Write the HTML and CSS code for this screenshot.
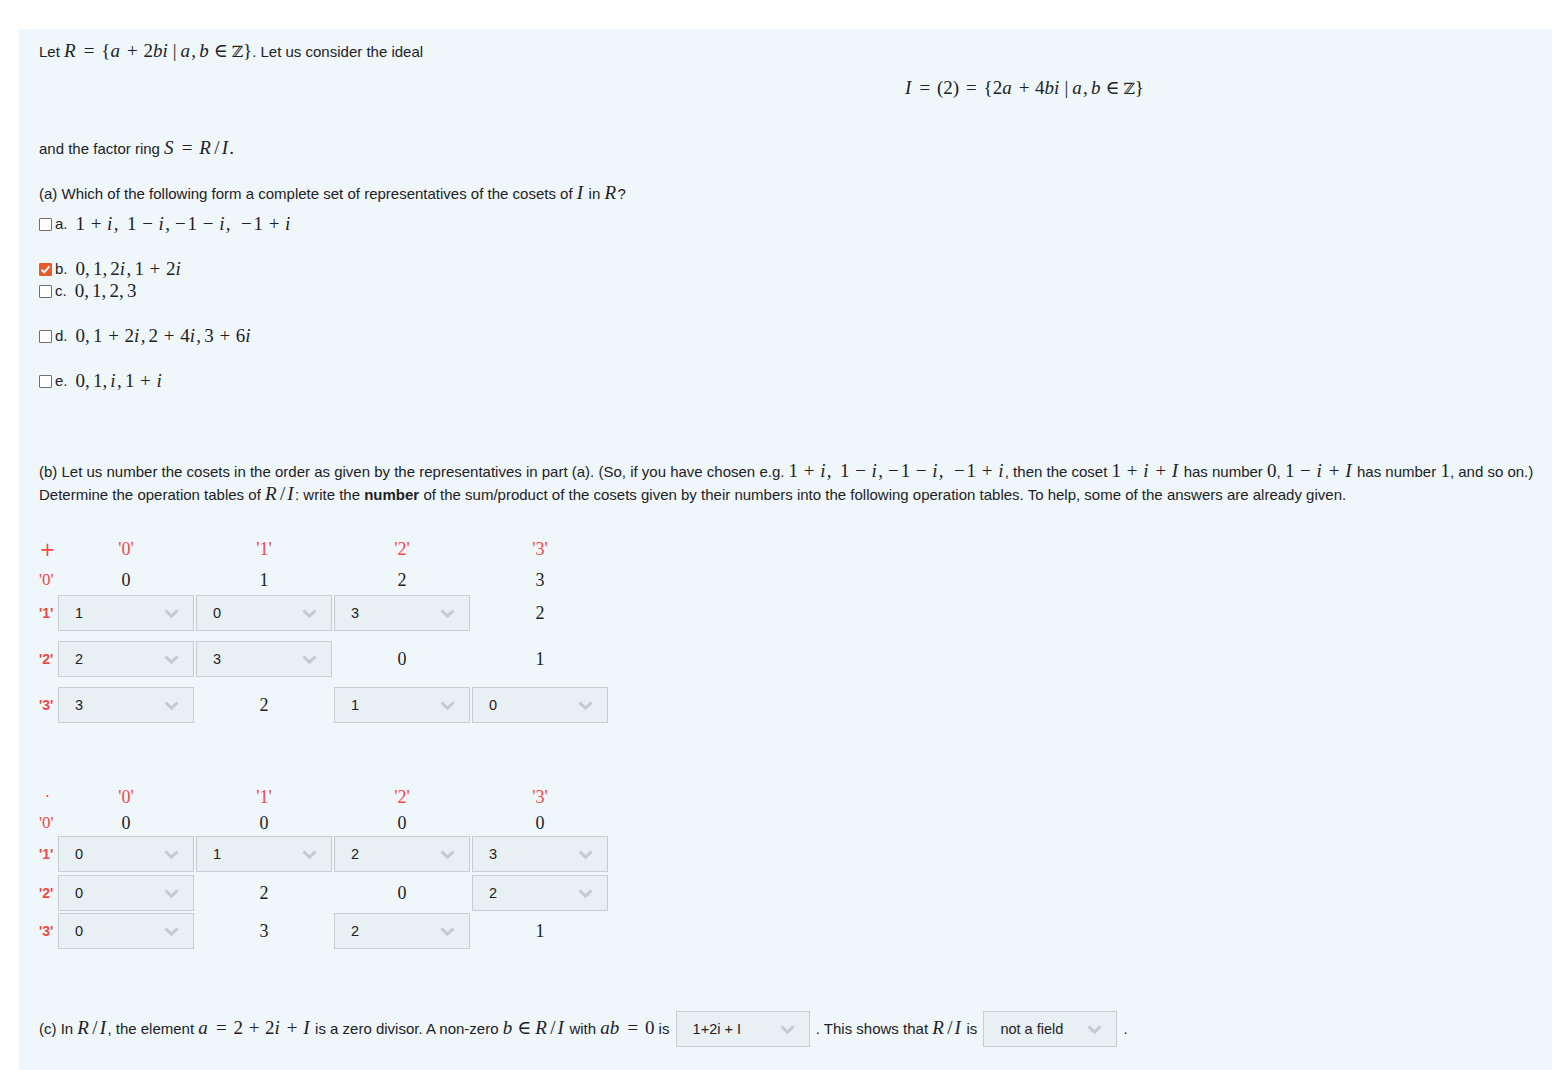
FILE: index.html
```html
<!DOCTYPE html>
<html>
<head>
<meta charset="utf-8">
<link rel="stylesheet" href="styles.css">
</head>
<body>
<div class="panel">
  <p class="line l1">Let <span class="m"><i>R</i><span class="r">=</span>{<i>a</i><span class="o">+</span>2<i>bi</i><span class="mid">|</span><i>a</i><span class="c">,</span><i>b</i><span class="in">∈</span><span class="bb">ℤ</span>}</span>. Let us consider the ideal</p>
  <div class="line display"><span class="m"><i>I</i><span class="r">=</span>(2)<span class="r">=</span>{2<i>a</i><span class="o">+</span>4<i>bi</i><span class="mid">|</span><i>a</i><span class="c">,</span><i>b</i><span class="in">∈</span><span class="bb">ℤ</span>}</span></div>
  <p class="line l3">and the factor ring <span class="m"><i>S</i><span class="r">=</span><i>R</i><span class="sl">/</span><i>I</i>.</span></p>
  <p class="line qa">(a) Which of the following form a complete set of representatives of the cosets of <span class="m"><i>I</i></span> in <span class="m"><i>R</i></span>?</p>
  <div class="opts">
    <div class="opt h45"><span class="cb"></span><span class="lbl">a.</span><span class="m ans">1<span class="o">+</span><i>i</i><span class="c">,</span><span class="sp"></span>1<span class="o">−</span><i>i</i><span class="c">,</span><span class="u">−</span>1<span class="o">−</span><i>i</i><span class="c">,</span><span class="sp"></span><span class="u">−</span>1<span class="o">+</span><i>i</i></span></div>
    <div class="opt h22"><span class="cb on"><svg width="13" height="13" viewBox="0 0 13 13"><path d="M2.5 6.8 L5.2 9.4 L10.5 3.4" fill="none" stroke="#fff" stroke-width="2"/></svg></span><span class="lbl">b.</span><span class="m ans">0<span class="c">,</span>1<span class="c">,</span>2<i>i</i><span class="c">,</span>1<span class="o">+</span>2<i>i</i></span></div>
    <div class="opt h45"><span class="cb"></span><span class="lbl">c.</span><span class="m ans">0<span class="c">,</span>1<span class="c">,</span>2<span class="c">,</span>3</span></div>
    <div class="opt h45"><span class="cb"></span><span class="lbl">d.</span><span class="m ans">0<span class="c">,</span>1<span class="o">+</span>2<i>i</i><span class="c">,</span>2<span class="o">+</span>4<i>i</i><span class="c">,</span>3<span class="o">+</span>6<i>i</i></span></div>
    <div class="opt h22"><span class="cb"></span><span class="lbl">e.</span><span class="m ans">0<span class="c">,</span>1<span class="c">,</span><i>i</i><span class="c">,</span>1<span class="o">+</span><i>i</i></span></div>
  </div>
  <p class="qb">(b) Let us number the cosets in the order as given by the representatives in part (a). (So, if you have chosen e.g. <span class="m">1<span class="o">+</span><i>i</i><span class="c">,</span><span class="sp"></span>1<span class="o">−</span><i>i</i><span class="c">,</span><span class="u">−</span>1<span class="o">−</span><i>i</i><span class="c">,</span><span class="sp"></span><span class="u">−</span>1<span class="o">+</span><i>i</i></span>, then the coset <span class="m">1<span class="o">+</span><i>i</i><span class="o">+</span><i>I</i></span> has number <span class="m">0</span>, <span class="m">1<span class="o">−</span><i>i</i><span class="o">+</span><i>I</i></span> has number <span class="m">1</span>, and so on.)<br>Determine the operation tables of <span class="m"><i>R</i><span class="sl">/</span><i>I</i></span>: write the <strong>number</strong> of the sum/product of the cosets given by their numbers into the following operation tables. To help, some of the answers are already given.</p>

  <div class="tbl t1">
    <div class="row hd"><div class="op">+</div><div class="ch">'0'</div><div class="ch">'1'</div><div class="ch">'2'</div><div class="ch">'3'</div></div>
    <div class="row r0"><div class="rl0">'0'</div><div class="v">0</div><div class="v">1</div><div class="v">2</div><div class="v">3</div></div>
    <div class="row rs h46"><div class="rl">'1'</div><div class="sel"><span>1</span><svg width="15" height="9" viewBox="0 0 15 9"><path d="M1.5 1.5 L7.5 7.2 L13.5 1.5" fill="none" stroke="#c6cacd" stroke-width="3"/></svg></div><div class="sel"><span>0</span><svg width="15" height="9" viewBox="0 0 15 9"><path d="M1.5 1.5 L7.5 7.2 L13.5 1.5" fill="none" stroke="#c6cacd" stroke-width="3"/></svg></div><div class="sel"><span>3</span><svg width="15" height="9" viewBox="0 0 15 9"><path d="M1.5 1.5 L7.5 7.2 L13.5 1.5" fill="none" stroke="#c6cacd" stroke-width="3"/></svg></div><div class="v">2</div></div>
    <div class="row rs h46"><div class="rl">'2'</div><div class="sel"><span>2</span><svg width="15" height="9" viewBox="0 0 15 9"><path d="M1.5 1.5 L7.5 7.2 L13.5 1.5" fill="none" stroke="#c6cacd" stroke-width="3"/></svg></div><div class="sel"><span>3</span><svg width="15" height="9" viewBox="0 0 15 9"><path d="M1.5 1.5 L7.5 7.2 L13.5 1.5" fill="none" stroke="#c6cacd" stroke-width="3"/></svg></div><div class="v">0</div><div class="v">1</div></div>
    <div class="row rs h36"><div class="rl">'3'</div><div class="sel"><span>3</span><svg width="15" height="9" viewBox="0 0 15 9"><path d="M1.5 1.5 L7.5 7.2 L13.5 1.5" fill="none" stroke="#c6cacd" stroke-width="3"/></svg></div><div class="v">2</div><div class="sel"><span>1</span><svg width="15" height="9" viewBox="0 0 15 9"><path d="M1.5 1.5 L7.5 7.2 L13.5 1.5" fill="none" stroke="#c6cacd" stroke-width="3"/></svg></div><div class="sel"><span>0</span><svg width="15" height="9" viewBox="0 0 15 9"><path d="M1.5 1.5 L7.5 7.2 L13.5 1.5" fill="none" stroke="#c6cacd" stroke-width="3"/></svg></div></div>
  </div>

  <div class="tbl t2">
    <div class="row hd2"><div class="op dot">·</div><div class="ch">'0'</div><div class="ch">'1'</div><div class="ch">'2'</div><div class="ch">'3'</div></div>
    <div class="row r02"><div class="rl0">'0'</div><div class="v">0</div><div class="v">0</div><div class="v">0</div><div class="v">0</div></div>
    <div class="row rs h39"><div class="rl">'1'</div><div class="sel"><span>0</span><svg width="15" height="9" viewBox="0 0 15 9"><path d="M1.5 1.5 L7.5 7.2 L13.5 1.5" fill="none" stroke="#c6cacd" stroke-width="3"/></svg></div><div class="sel"><span>1</span><svg width="15" height="9" viewBox="0 0 15 9"><path d="M1.5 1.5 L7.5 7.2 L13.5 1.5" fill="none" stroke="#c6cacd" stroke-width="3"/></svg></div><div class="sel"><span>2</span><svg width="15" height="9" viewBox="0 0 15 9"><path d="M1.5 1.5 L7.5 7.2 L13.5 1.5" fill="none" stroke="#c6cacd" stroke-width="3"/></svg></div><div class="sel"><span>3</span><svg width="15" height="9" viewBox="0 0 15 9"><path d="M1.5 1.5 L7.5 7.2 L13.5 1.5" fill="none" stroke="#c6cacd" stroke-width="3"/></svg></div></div>
    <div class="row rs h38"><div class="rl">'2'</div><div class="sel"><span>0</span><svg width="15" height="9" viewBox="0 0 15 9"><path d="M1.5 1.5 L7.5 7.2 L13.5 1.5" fill="none" stroke="#c6cacd" stroke-width="3"/></svg></div><div class="v">2</div><div class="v">0</div><div class="sel"><span>2</span><svg width="15" height="9" viewBox="0 0 15 9"><path d="M1.5 1.5 L7.5 7.2 L13.5 1.5" fill="none" stroke="#c6cacd" stroke-width="3"/></svg></div></div>
    <div class="row rs h36"><div class="rl">'3'</div><div class="sel"><span>0</span><svg width="15" height="9" viewBox="0 0 15 9"><path d="M1.5 1.5 L7.5 7.2 L13.5 1.5" fill="none" stroke="#c6cacd" stroke-width="3"/></svg></div><div class="v">3</div><div class="sel"><span>2</span><svg width="15" height="9" viewBox="0 0 15 9"><path d="M1.5 1.5 L7.5 7.2 L13.5 1.5" fill="none" stroke="#c6cacd" stroke-width="3"/></svg></div><div class="v">1</div></div>
  </div>

  <p class="qc">(c) In <span class="m"><i>R</i><span class="sl">/</span><i>I</i></span>, the element <span class="m"><i>a</i><span class="r">=</span>2<span class="o">+</span>2<i>i</i><span class="o">+</span><i>I</i></span> is a zero divisor. A non-zero <span class="m"><i>b</i><span class="in">∈</span><i>R</i><span class="sl">/</span><i>I</i></span> with <span class="m"><i>ab</i><span class="r">=</span>0</span> is <span class="sel isel"><span>1+2i + I</span><svg width="15" height="9" viewBox="0 0 15 9"><path d="M1.5 1.5 L7.5 7.2 L13.5 1.5" fill="none" stroke="#c6cacd" stroke-width="3"/></svg></span> . This shows that <span class="m"><i>R</i><span class="sl">/</span><i>I</i></span> is <span class="sel isel"><span>not a field</span><svg width="15" height="9" viewBox="0 0 15 9"><path d="M1.5 1.5 L7.5 7.2 L13.5 1.5" fill="none" stroke="#c6cacd" stroke-width="3"/></svg></span> .</p>
</div>
</body>
</html>
```
FILE: styles.css
```css
html, body {
  margin: 0;
  padding: 0;
  background: #ffffff;
}
body {
  font-family: "Liberation Sans", Arial, sans-serif;
  font-size: 15px;
  color: #1d2125;
  overflow: hidden;
}
.panel {
  margin: 29px 0 0 19px;
  padding: 11px 20px 30px 20px;
  min-height: 1041px;
  box-sizing: border-box;
  background: #eff7fa;
}
p { margin: 0; }
.line { line-height: 22px; white-space: nowrap; }
.l1 { padding-top: 1px; }
.display { margin-top: 15px; padding-left: 866px; }
.l3 { margin-top: 38px; }
.qa { margin-top: 23px; }

.m {
  font-family: "Liberation Serif", "DejaVu Serif", serif;
  font-size: 19px;
  line-height: 0;
  white-space: nowrap;
}
.m i { font-style: italic; padding-right: 0.07em; }
.r { margin: 0 0.36em; }
.mid { margin: 0 0.2em; }
.in { margin: 0 0.2em; }
.o { margin: 0 0.3em; }
.u { margin: 0 0.1em; }
.sl { margin: 0 0.11em; }
.c { margin-right: 0.167em; }
.sp { display: inline-block; width: 0.28em; }
.bb { font-family: "DejaVu Serif", serif; font-size: 0.82em; }

.opts { margin-top: 8px; }
.opt { display: flex; align-items: flex-start; line-height: 22px; }
.h45 { height: 45px; }
.h22 { height: 22px; }
.cb {
  width: 13px;
  height: 13px;
  box-sizing: border-box;
  border: 1px solid #6f6f6f;
  background: #fff;
  border-radius: 1px;
  margin-top: 5px;
  display: flex;
}
.cb.on {
  background: #ea5a2a;
  border-color: #ea5a2a;
}
.cb svg { margin: -1px; }
.lbl { margin-left: 3px; }
.ans { margin-left: 8px; line-height: 22px; }

.qb {
  margin-top: 68px;
  line-height: 23px;
  white-space: nowrap;
}
.qb strong { font-weight: bold; }

.tbl { display: flex; flex-direction: column; }
.t1 { margin-top: 27px; }
.t2 { margin-top: 62px; }
.row {
  display: grid;
  grid-template-columns: 17px repeat(4, 136px);
  column-gap: 2px;
  align-items: center;
}
.row.rs { align-items: start; }
.hd { height: 32px; }
.r0 { height: 30px; }
.hd2 { height: 24px; }
.r02 { height: 27px; }
.h46 { height: 46px; }
.h39 { height: 39px; }
.h38 { height: 38px; }
.h36 { height: 36px; }

.op {
  color: #f04848;
  font-family: "DejaVu Sans", sans-serif;
  font-size: 19px;
  text-align: center;
  line-height: 20px;
}
.op.dot { font-size: 15px; line-height: 24px; }
.ch, .v {
  font-family: "Liberation Serif", "DejaVu Serif", serif;
  font-size: 18px;
  text-align: center;
  line-height: 20px;
}
.ch { color: #f04848; }
.v { color: #1d2125; }
.rs .v { height: 36px; line-height: 36px; }
.rl0 {
  color: #f04848;
  font-family: "Liberation Serif", serif;
  font-size: 17px;
  line-height: 20px;
}
.rl {
  color: #f04848;
  font-weight: bold;
  font-size: 14px;
  height: 36px;
  line-height: 36px;
}
.sel {
  height: 36px;
  box-sizing: border-box;
  border: 1px solid #c8cdd0;
  background: #e8f0f3;
  display: flex;
  align-items: center;
  justify-content: space-between;
  padding: 0 14px 0 16px;
  font-family: "Liberation Sans", Arial, sans-serif;
  font-size: 14.5px;
  color: #1d2125;
}
.sel svg { margin-top: 1px; }

.qc {
  margin-top: 62px;
  line-height: 36px;
  white-space: nowrap;
}
.isel {
  display: inline-flex;
  vertical-align: middle;
  width: 134px;
  margin: -2px 2px 0 2px;
}
```
